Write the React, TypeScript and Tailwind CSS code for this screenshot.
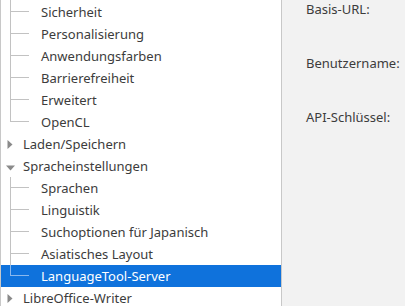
import React from "react";

type Row = {
  label: string;
  kind: "child" | "last" | "parent";
  open?: boolean;
  selected?: boolean;
};

const rows: Row[] = [
  { label: "Sicherheit", kind: "child" },
  { label: "Personalisierung", kind: "child" },
  { label: "Anwendungsfarben", kind: "child" },
  { label: "Barrierefreiheit", kind: "child" },
  { label: "Erweitert", kind: "child" },
  { label: "OpenCL", kind: "last" },
  { label: "Laden/Speichern", kind: "parent" },
  { label: "Spracheinstellungen", kind: "parent", open: true },
  { label: "Sprachen", kind: "child" },
  { label: "Linguistik", kind: "child" },
  { label: "Suchoptionen für Japanisch", kind: "child" },
  { label: "Asiatisches Layout", kind: "child" },
  { label: "LanguageTool-Server", kind: "last", selected: true },
  { label: "LibreOffice-Writer", kind: "parent" },
];

function Connector({ last, selected }: { last: boolean; selected?: boolean }) {
  const line = selected ? "border-[#8ab8ee]" : "border-[#c2c2c2]";
  if (last) {
    return (
      <div className="w-[40px] h-full shrink-0">
        <div className={`ml-[9px] w-[19px] h-[11px] border-l border-b ${line}`} />
      </div>
    );
  }
  return (
    <div className="w-[40px] h-full shrink-0">
      <div className={`ml-[9px] w-[19px] h-full border-l ${line}`}>
        <div className={`h-[11px] border-b ${line}`} />
      </div>
    </div>
  );
}

function Arrow({ open }: { open?: boolean }) {
  return (
    <div className="w-[22px] h-full shrink-0 flex items-center">
      {open ? (
        <svg width="22" height="22" viewBox="0 0 22 22">
          <path d="M5 10.5 L14 10.5 L9.5 15.5 Z" fill="#8a8a8a" />
        </svg>
      ) : (
        <svg width="22" height="22" viewBox="0 0 22 22">
          <path d="M6.5 7 L11.5 11.5 L6.5 16 Z" fill="#8a8a8a" />
        </svg>
      )}
    </div>
  );
}

function TreeRow({ row }: { row: Row }) {
  return (
    <div
      className={`flex h-[22px] items-stretch ${
        row.selected ? "bg-[#0f72dc] text-white" : "text-[#3c3c3c]"
      }`}
    >
      {row.kind === "parent" ? (
        <Arrow open={row.open} />
      ) : (
        <Connector last={row.kind === "last"} selected={row.selected} />
      )}
      <span className="flex items-center whitespace-nowrap leading-none">{row.label}</span>
    </div>
  );
}

export default function App() {
  return (
    <div
      className="flex h-[306px] w-[405px] overflow-hidden bg-[#f2f2f2] text-[13px]"
      style={{ fontFamily: '"Noto Sans", "Open Sans", sans-serif' }}
    >
      <div className="w-[282px] shrink-0 border-l border-r border-[#c8c8c8] bg-white">
        <div className="h-px">
          <div className="ml-[9px] h-px w-px bg-[#c2c2c2]" />
        </div>
        {rows.map((r) => (
          <TreeRow key={r.label} row={r} />
        ))}
      </div>
      <div className="flex flex-col pl-[24px] pt-px text-[#3c3c3c]">
        <div className="h-[16px] leading-[16px]">Basis-URL:</div>
        <div className="mt-[38px] h-[16px] leading-[16px]">Benutzername:</div>
        <div className="mt-[38px] h-[16px] leading-[16px]">API-Schlüssel:</div>
      </div>
    </div>
  );
}
